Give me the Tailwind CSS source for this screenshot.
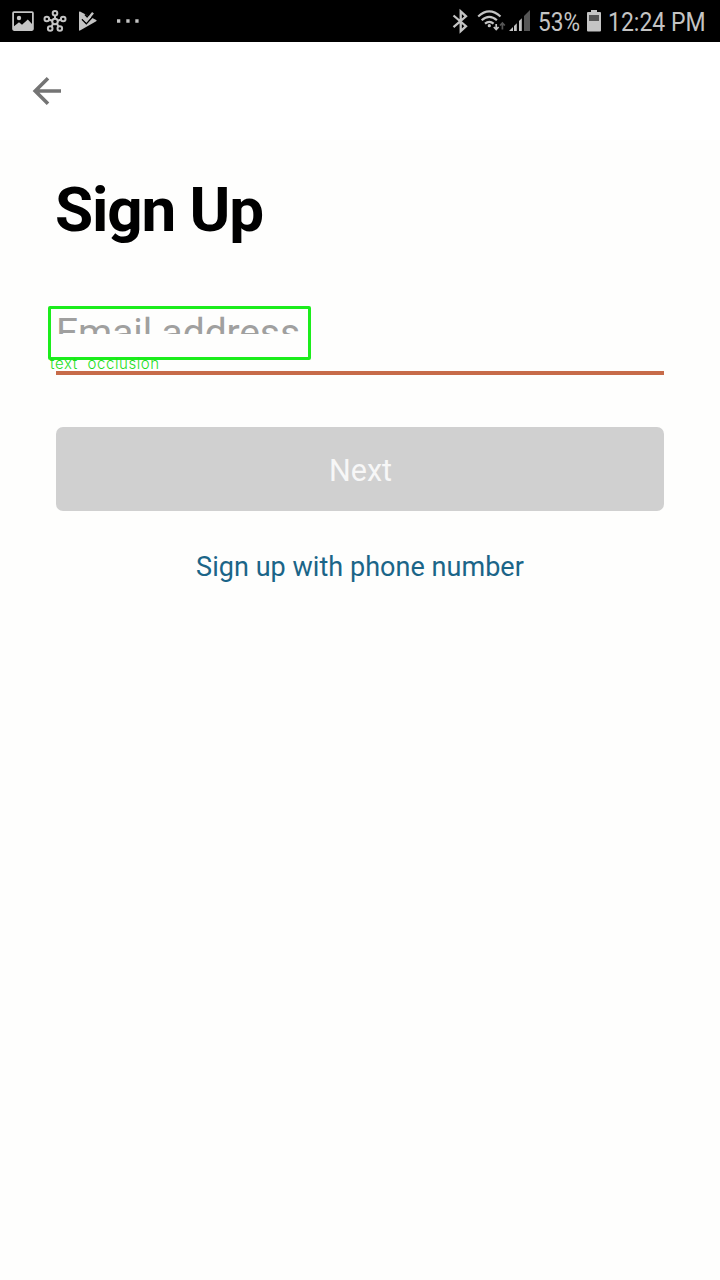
<!DOCTYPE html>
<html lang="en">
<head>
<meta charset="utf-8">
<title>Sign Up</title>
<script src="https://cdn.jsdelivr.net/npm/@tailwindcss/browser@4"></script>
</head>
<body class="bg-[#fefefd] font-[Roboto,sans-serif]">
<div class="flex h-[1280px] w-[720px] flex-col overflow-hidden">
  <header class="flex h-[42px] shrink-0 items-center justify-between bg-black text-[#c4c4c4]">
    <svg class="h-[42px] w-[150px]" viewBox="0 0 150 42" fill="none">
      <path fill="#c4c4c4" fill-rule="evenodd" d="M14 11.3h18a1.800 1.800 0 0 1 1.800 1.800v16a1.800 1.800 0 0 1-1.800 1.800H14a1.800 1.800 0 0 1-1.800-1.800v-16a1.800 1.800 0 0 1 1.800-1.800ZM14 13v13.200l5-4 3 2.600 5.800-5.300 4.200 4.500V13Z"/>
      <circle cx="19" cy="18" r="2.200" fill="#c4c4c4"/>
      <g stroke="#c4c4c4" stroke-width="2">
        <path d="M55 18.500v-2.800M52.300 20.700l-2.800-1M57.700 20.700l2.800-1M53.200 23.800l-1.700 2.400M56.800 23.800l1.700 2.400"/>
        <circle cx="55" cy="21.500" r="2.800"/><circle cx="55" cy="13.300" r="2.300"/><circle cx="46.800" cy="19" r="2.300"/><circle cx="63.200" cy="19" r="2.300"/><circle cx="50.200" cy="28.500" r="2.300"/><circle cx="59.800" cy="28.500" r="2.300"/>
      </g>
      <path fill="#c4c4c4" d="M79 12.200v17.800q0 1 1 .500l16.200-9.200q1-.700 0-1.300L80 11.600q-1-.300-1 .600Z"/>
      <path stroke="#000" stroke-width="1.600" d="m82 19.300 4.300 4.200 7.800-8.300M85 14.500l2.200 2.300 3.300-3.600"/>
      <path stroke="#c4c4c4" stroke-width="2.400" d="m83 17.700 3.400 3.300 6.600-8.200"/>
      <path fill="#c4c4c4" d="M117 19.300h3.300v3.400H117zM126.300 19.300h3.300v3.400h-3.300zM135.300 19.300h3.300v3.400h-3.300z"/>
    </svg>
    <div class="flex h-full items-center">
      <svg class="h-[42px] w-[88px]" viewBox="450 0 88 42" fill="none">
        <path stroke="#c4c4c4" stroke-width="2.300" d="m453.500 15.500 12.500 10.700-5.300 5V11.300l5.300 5-12.500 10.800"/>
        <g stroke="#c4c4c4" stroke-width="2.200"><path d="M478.200 16.500q11-10.200 22.300 0M481.700 20.200q7.500-6.800 15.200 0M485 23.600q4.300-3.600 8.600 0"/></g>
        <circle cx="489.300" cy="25.700" r="1.600" fill="#c4c4c4"/>
        <path stroke="#c4c4c4" stroke-width="1.700" d="M496.200 24v5M493.800 27l2.400 2.500 2.400-2.500"/>
        <path stroke="#555" stroke-width="1.700" d="M502.400 29.500v-6.500M500 25.500l2.400-2.500 2.400 2.500"/>
        <path fill="#c4c4c4" d="M509 31l4-4V31zM514 26l2.800-2.800V31H514zM519 21l2.800-2.800V31H519z"/>
        <path fill="#555" d="m524 16 6-6v21h-6z"/>
      </svg>
      <div class="w-[42px]"><div class="origin-left scale-x-[.87] text-[26px] leading-[42px] mt-[2px] whitespace-nowrap">53%</div></div>
      <svg class="h-[42px] w-[28px]" viewBox="580 0 28 42">
        <path fill="#c4c4c4" d="M591 10h6v2h3q1 0 1 1v17.500q0 1-1 1h-12q-1 0-1-1V13q0-1 1-1h3z"/><path fill="#555" d="M589 15h10v6h-10z"/>
      </svg>
      <div class="w-[112px]"><div class="origin-left scale-x-[.885] text-[26px] leading-[42px] mt-[2px] whitespace-nowrap">12:24 PM</div></div>
    </div>
  </header>
  <nav class="flex h-[98px] shrink-0 items-center bg-white pl-[32px]">
    <svg class="h-[32px] w-[32px]" viewBox="0 0 32 32" fill="none" stroke="#747474" stroke-width="3.600"><path d="M29 16H4M16 3.200 3.200 16 16 28.800"/></svg>
  </nav>
  <main class="flex flex-col px-[56px]">
    <h1 class="mt-[34px] -ml-px h-[72px] text-[62px] leading-[72px] font-bold tracking-[-1.150px] text-black">Sign Up</h1>
    <div class="relative mt-[60px] -ml-[8px] h-[54px] w-[263px] rounded-[2px] border-3 border-[#1ced1c]">
      <div class="h-[25px] overflow-hidden pl-[5px]"><div class="text-[39px] leading-[48px] tracking-[-.1px] whitespace-nowrap text-[#a0a09f]">Email address</div></div>
      <div class="absolute top-[47px] -left-px z-10 font-[Inter,sans-serif] text-[15px] leading-[16px] font-light tracking-[.600px] whitespace-nowrap text-[#1fdf1f]">text&nbsp; occlusion</div>
    </div>
    <div class="mt-[11px] h-[4px] bg-[#c76b49]"></div>
    <button class="mt-[52px] h-[84px] rounded-[7px] bg-[#d0d0d0] pt-[4px] pl-[1px] text-[30.500px] text-[#f7f7f7]">Next</button>
    <a class="mt-[38px] text-center text-[27px] leading-[36px] tracking-[.040px] whitespace-nowrap text-[#1b6588]">Sign up with phone number</a>
  </main>
</div>
</body>
</html>
